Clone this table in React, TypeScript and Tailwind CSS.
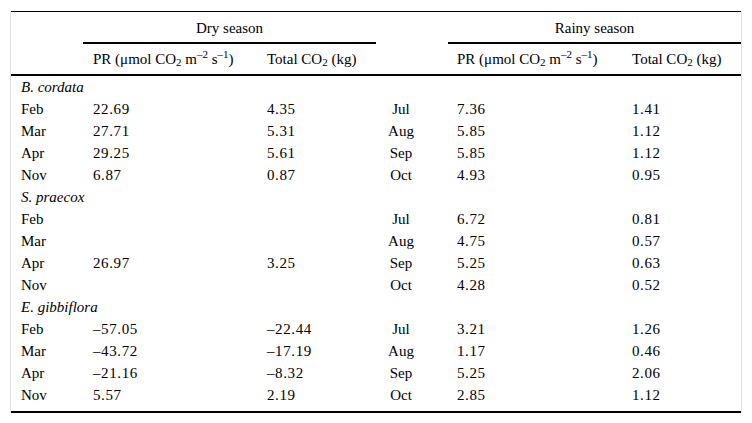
import React from 'react';

type Row = [string, string, string, string, string, string];

const groups: { name: string; rows: Row[] }[] = [
  {
    name: 'B. cordata',
    rows: [
      ['Feb', '22.69', '4.35', 'Jul', '7.36', '1.41'],
      ['Mar', '27.71', '5.31', 'Aug', '5.85', '1.12'],
      ['Apr', '29.25', '5.61', 'Sep', '5.85', '1.12'],
      ['Nov', '6.87', '0.87', 'Oct', '4.93', '0.95'],
    ],
  },
  {
    name: 'S. praecox',
    rows: [
      ['Feb', '', '', 'Jul', '6.72', '0.81'],
      ['Mar', '', '', 'Aug', '4.75', '0.57'],
      ['Apr', '26.97', '3.25', 'Sep', '5.25', '0.63'],
      ['Nov', '', '', 'Oct', '4.28', '0.52'],
    ],
  },
  {
    name: 'E. gibbiflora',
    rows: [
      ['Feb', '–57.05', '–22.44', 'Jul', '3.21', '1.26'],
      ['Mar', '–43.72', '–17.19', 'Aug', '1.17', '0.46'],
      ['Apr', '–21.16', '–8.32', 'Sep', '5.25', '2.06'],
      ['Nov', '5.57', '2.19', 'Oct', '2.85', '1.12'],
    ],
  },
];

function PrHeader() {
  return (
    <>
      PR (μmol CO<sub className="text-[11px] relative top-[2px]">2</sub> m<sup className="text-[11px]">–2</sup> s<sup className="text-[11px]">–1</sup>)
    </>
  );
}

function TotalHeader() {
  return (
    <>
      Total CO<sub className="text-[11px] relative top-[2px]">2</sub> (kg)
    </>
  );
}

export default function App() {
  return (
    <div className="bg-white w-[752px] h-[423px] pt-[11px] pl-[10px] text-black font-['Liberation_Serif','Times_New_Roman',serif]">
      <div className="w-[732px] border-x border-[#e3e3e3]">
        <table className="w-[730px] table-fixed border-collapse text-[15px] leading-[20px] border-t border-b-2 border-black">
          <colgroup>
            <col className="w-[72px]" />
            <col className="w-[174px]" />
            <col className="w-[119px]" />
            <col className="w-[72px]" />
            <col className="w-[174px]" />
            <col className="w-[119px]" />
          </colgroup>
          <thead>
            <tr className="h-[31px]">
              <th />
              <th colSpan={2} className="font-normal text-center border-b-2 border-black pt-[2px]">Dry season</th>
              <th />
              <th colSpan={2} className="font-normal text-center border-b-2 border-black pt-[2px]">Rainy season</th>
            </tr>
            <tr className="h-[32px] border-b-2 border-black">
              <th />
              <th className="font-normal text-left pl-[10px] whitespace-nowrap"><PrHeader /></th>
              <th className="font-normal text-left pl-[10px] whitespace-nowrap"><TotalHeader /></th>
              <th />
              <th className="font-normal text-left pl-[9px] whitespace-nowrap"><PrHeader /></th>
              <th className="font-normal text-left pl-[10px] whitespace-nowrap"><TotalHeader /></th>
            </tr>
          </thead>
          <tbody>
            {groups.map((g) => (
              <React.Fragment key={g.name}>
                <tr>
                  <td colSpan={6} className="pl-[10px] pt-[1px] pb-[1px] italic">{g.name}</td>
                </tr>
                {g.rows.map((r, i) => (
                  <tr key={i}>
                    <td className="pl-[10px] pt-[1px] pb-[1px]">{r[0]}</td>
                    <td className="pl-[10px] pt-[1px] pb-[1px] tracking-[0.6px]">{r[1]}</td>
                    <td className="pl-[10px] pt-[1px] pb-[1px] tracking-[0.6px]">{r[2]}</td>
                    <td className="text-center pr-[22px] pt-[1px] pb-[1px]">{r[3]}</td>
                    <td className="pl-[9px] pt-[1px] pb-[1px] tracking-[0.6px]">{r[4]}</td>
                    <td className="pl-[10px] pt-[1px] pb-[1px] tracking-[0.6px]">{r[5]}</td>
                  </tr>
                ))}
              </React.Fragment>
            ))}
            <tr className="h-[6px]">
              <td colSpan={6} />
            </tr>
          </tbody>
        </table>
      </div>
    </div>
  );
}
